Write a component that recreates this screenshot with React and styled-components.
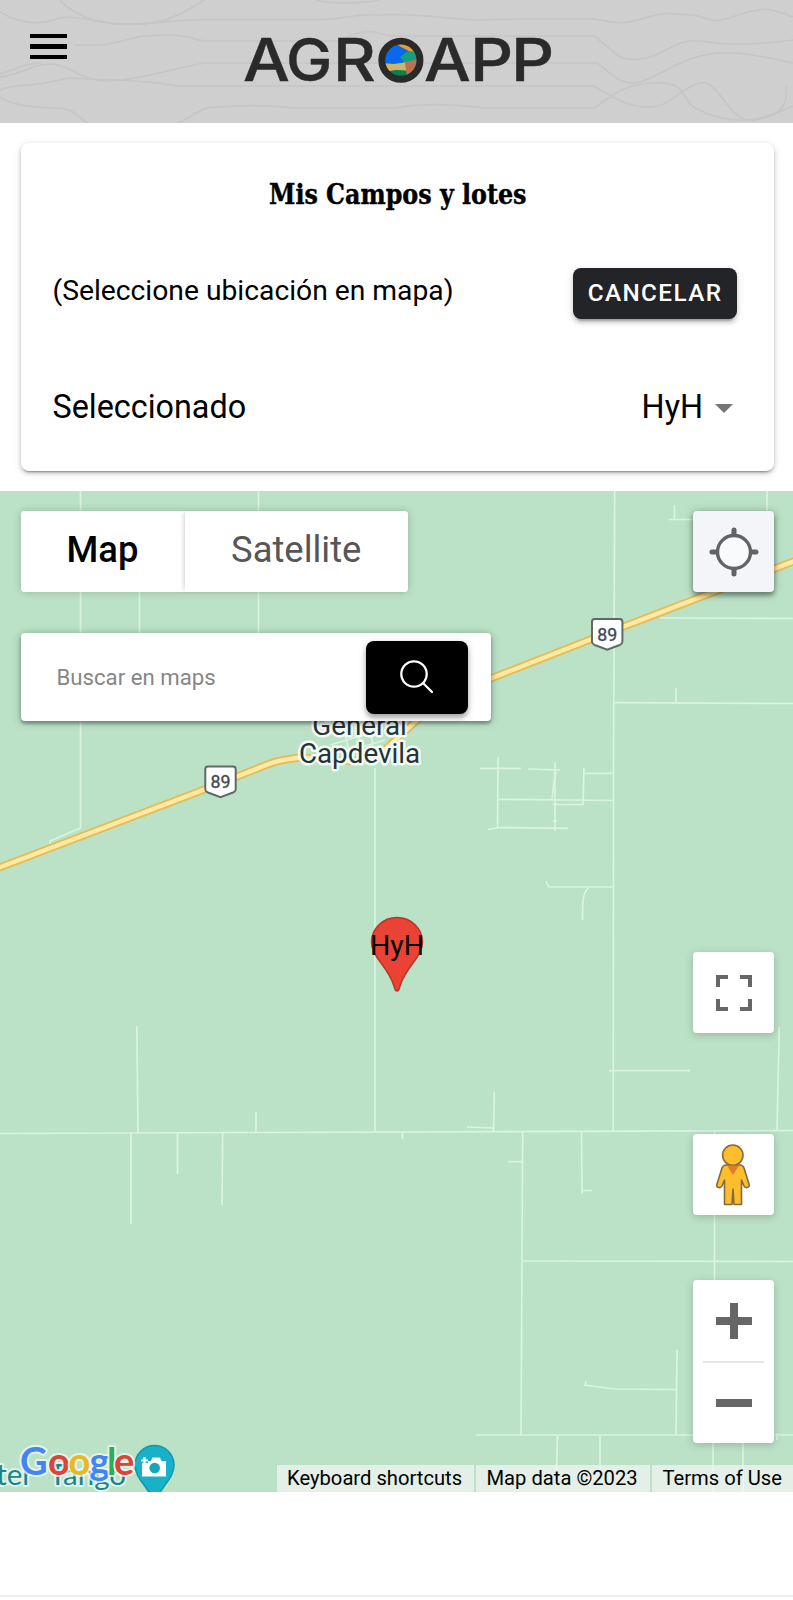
import React from "react";
import styled, { createGlobalStyle } from "styled-components";

const GlobalStyle = createGlobalStyle`
  * { box-sizing: border-box; }
  html, body { margin: 0; padding: 0; background: #fff; }
  body { font-family: Roboto, "Liberation Sans", sans-serif; color: #000; overflow: hidden; }
  button, input { font-family: inherit; border: 0; padding: 0; margin: 0; }
`;

const Page = styled.div`
  display: flex;
  flex-direction: column;
  width: 793px;
  height: 1600px;
  background: #fff;
`;

const Header = styled.header`
  position: relative;
  display: flex;
  align-items: flex-start;
  flex: 0 0 123px;
  padding: 34px 0 0 30px;
  background: #cfcfcf;
`;

const HeaderLines = styled.svg`
  position: absolute;
  inset: 0;
`;

const MenuButton = styled.button`
  display: flex;
  flex-direction: column;
  gap: 6px;
  width: 37px;
  background: none;
  position: relative;

  span {
    height: 4.3px;
    background: #000;
  }
`;

const Logo = styled.svg`
  position: relative;
  margin: -14px 0 0 163px;
`;

const Card = styled.section`
  flex: 0 0 328px;
  margin: 20px 19px 20px 20.5px;
  padding: 0 37px 0 32px;
  border-radius: 8px;
  background: #fff;
  box-shadow: 0 3px 2px -2px rgba(0, 0, 0, 0.32), 0 2px 4px rgba(0, 0, 0, 0.2),
    0 2px 10px rgba(0, 0, 0, 0.1);
`;

const Title = styled.h1`
  margin: 0 -37px 0 -32px;
  padding-top: 32px;
  height: 110px;
  text-align: center;
  font: bold 28px/40px "DejaVu Serif", serif;
  font-stretch: condensed;
  white-space: nowrap;
  -webkit-text-stroke: 0.4px #000;
  transform: scaleX(0.945);
`;

const CardRow = styled.div`
  display: flex;
  align-items: center;
  justify-content: space-between;
  height: ${(p) => p.$height}px;
  padding-top: ${(p) => p.$drop || 0}px;
`;

const Label = styled.span`
  font-size: ${(p) => p.$size}px;
  line-height: 40px;
  white-space: nowrap;
  margin-top: ${(p) => p.$drop || 0}px;
`;

const CancelButton = styled.button`
  width: 164px;
  height: 51px;
  margin-top: -1px;
  border-radius: 8px;
  background: #222428;
  color: #fff;
  font-size: 24.3px;
  font-weight: 500;
  letter-spacing: 1.4px;
  padding-bottom: 3px;
  box-shadow: 0 6px 2px -4px rgba(0, 0, 0, 0.2), 0 4px 4px rgba(0, 0, 0, 0.14),
    0 2px 9px rgba(0, 0, 0, 0.12);
`;

const Select = styled.div`
  display: flex;
  align-items: center;
  gap: 12px;
  padding-right: 4px;
`;

const Caret = styled.span`
  border: 9.5px solid transparent;
  border-top-color: #757575;
  border-bottom: 0;
  margin-top: 3px;
`;

const MapArea = styled.main`
  position: relative;
  flex: 0 0 1001px;
  overflow: hidden;
  background: #bbe2c6;
`;

const MapCanvas = styled.svg`
  position: absolute;
  inset: 0;
`;

const Controls = styled.div`
  position: relative;
  display: flex;
  justify-content: space-between;
  padding: 20px 19px 0 20.5px;
`;

const LeftControls = styled.div`
  display: flex;
  flex-direction: column;
  align-items: flex-start;
  gap: 41px;
`;

const RightControls = styled.div`
  display: flex;
  flex-direction: column;
`;

const MapTypes = styled.div`
  display: flex;
  height: 81px;
  border-radius: 4px;
  background: #fff;
  box-shadow: 0 0 8px rgba(0, 0, 0, 0.2);
`;

const MapType = styled.button`
  width: ${(p) => p.$width}px;
  padding-bottom: 4px;
  border-radius: 4px;
  background: #fff;
  font-size: 36.4px;
  font-weight: ${(p) => (p.$active ? 500 : 400)};
  color: ${(p) => (p.$active ? "#000" : "#565656")};

  & + & {
    border-radius: 0 4px 4px 0;
    box-shadow: -3px 0 4px -2px rgba(0, 0, 0, 0.18);
  }
`;

const SearchBox = styled.div`
  display: flex;
  align-items: center;
  width: 470.5px;
  height: 88px;
  padding: 0 23px 0 36px;
  border-radius: 4px;
  background: #fff;
  box-shadow: 0 3px 3px rgba(0, 0, 0, 0.25), 0 1px 9px rgba(0, 0, 0, 0.3);
`;

const SearchInput = styled.input`
  flex: 1;
  min-width: 0;
  margin-bottom: 1px;
  background: transparent;
  font-size: 22.2px;
  outline: 0;

  &::placeholder {
    color: #868686;
    opacity: 1;
  }
`;

const SearchButton = styled.button`
  display: grid;
  place-items: center;
  width: 102px;
  height: 73px;
  border-radius: 8px;
  background: #000;
  box-shadow: 0 4px 4px rgba(0, 0, 0, 0.25), 0 2px 9px rgba(0, 0, 0, 0.16);
`;

const MapButton = styled.button`
  display: grid;
  place-items: center;
  width: 81px;
  height: 81px;
  margin-top: ${(p) => p.$gap || 0}px;
  border-radius: 4px;
  background: ${(p) => (p.$raised ? "#f4f5f8" : "#fff")};
  box-shadow: ${(p) =>
    p.$raised
      ? "0 4px 4px rgba(0,0,0,.28), 0 1px 9px rgba(0,0,0,.35)"
      : "0 2px 8px rgba(0,0,0,.2)"};
`;

const ZoomGroup = styled.div`
  display: flex;
  flex-direction: column;
  align-items: center;
  width: 81px;
  height: 163px;
  margin-top: 65px;
  border-radius: 4px;
  background: #fff;
  box-shadow: 0 2px 8px rgba(0, 0, 0, 0.2);
`;

const ZoomButton = styled.button`
  display: grid;
  place-items: center;
  width: 61px;
  height: 81px;
  background: none;

  & + & {
    border-top: 2px solid #e6e6e6;
    height: 82px;
  }
`;

const Attribution = styled.div`
  position: absolute;
  right: 0;
  bottom: 0;
  display: flex;
  gap: 2px;
  height: 27px;
`;

const AttributionItem = styled.span`
  width: ${(p) => p.$width}px;
  padding-left: 10.5px;
  background: rgba(245, 245, 245, 0.7);
  font-size: 20.2px;
  line-height: 27px;
  white-space: nowrap;
`;

const BottomBar = styled.footer`
  flex: 1;
  margin-bottom: 3px;
  border-bottom: 2px solid #efefef;
`;

const contours = [
  "M0 12C20 24 38 24 50 21S60 16 78 18S100 23 125 24S170 20 207 19.500H325C350 18 350 14 380 15C415 13 440 18 475 20L520 19H594C620 24 625 24 645 18S665 13 690 15S705 26 735 16S770 8 793 17",
  "M60 0C72 14 95 24 125 24.500S175 20 207 -2",
  "M315 0C330 4 360 4 380 0",
  "M75 45H100C125 43 130 35 165 35S190 41 207 41H340C360 28 375 31 390 36H594C615 50 615 62 640 59S670 43 690 41S720 50 793 40",
  "M0 77C25 74 30 64 50 64S80 82 110 81S165 70 205 63H597C615 77 620 84 635 83S675 62 700 56S745 52 793 63",
  "M0 90C15 83 30 87 50 82S70 78 90 79S140 79 177 86H594C610 95 625 106 645 107S670 99 690 87S715 90 730 108S755 123 793 106",
  "M0 97C10 105 35 108 55 108S75 116 88 123",
  "M177 123C195 116 200 107 215 107S250 103 295 108H395C415 104 445 103 485 108H594C610 98 620 84 655 83S680 100 695 108S735 125 765 117S783 89 787 86",
  "M0 74C20 68 25 63 42 63",
];

const roads = [
  "M80.500 491V828L50 841V844", "M139.500 580V700", "M258.500 491V700",
  "M614.700 491L613.500 760L613.300 1131", "M375 768V1132", "M674.500 505V519M669 519.500H700",
  "M767 491V520", "M660 618L793 618.500", "M614 702.700L793 703.500", "M676 688V703",
  "M480 768.300H521M528 769L560 770", "M498 757L497.500 828", "M498 799.300L613 800.500",
  "M555 762V774L552 799", "M555 774V831M553 773H557M554 804H557M553 821H557", "M553 804.500H583L584 768", "M584 773.300H613",
  "M488 829.500L500 827.500L568 828.300", "M546 881L548.500 887H613", "M588 888C583 894 582.500 897 582.500 920",
  "M0 1133.500L250 1132.500L793 1130.500", "M136.800 1026L138 1133", "M131 1133V1224", "M177.500 1133V1174",
  "M222.700 1133L222 1205", "M256 1112V1133", "M402.500 1132V1139", "M494.300 1092L493.500 1131",
  "M467 1127L493 1128", "M609 1070.700H690", "M779.300 1027L777 1130", "M522.700 1131L521 1435",
  "M508 1161.700H522", "M581.500 1132L582 1194M582 1190.500H592", "M714.500 1131V1280",
  "M522.500 1261L793 1261.500", "M586 1381L585 1385L614 1389L676 1389.500", "M677 1350L676 1435",
  "M476 1435H793M777 1433V1440", "M557.500 1436L556.500 1470", "M600 1436V1470", "M713 1436V1492", "M743 1436V1492",
  "M330 745L380 730M345 735L351 760M358 732L362 752M370 730L373 745M342 753L385 740",
];

const highway =
  "M-2 868L203 790L237 776.500L270 763.500Q277 761 284 759.800L300 757.500L350 761Q375 760 390 745L415 722L438 703Q446 696 456 692L492 678L607 633L797 560";

const letters = [
  { char: "A", x: 243, scale: 1.12 },
  { char: "G", x: 286, scale: 1.05 },
  { char: "R", x: 333, scale: 1.12 },
  { char: "A", x: 424, scale: 1.12 },
  { char: "P", x: 470, scale: 1.14 },
  { char: "P", x: 511, scale: 1.14 },
];

function RouteShield({ x, y }) {
  return (
    <g transform={`translate(${x} ${y})`}>
      <path d="M-12.500 -15H12.500Q15 -15 15.200 -12.500V8Q15 10 12.500 11L0 15.600L-12.500 11Q-15 10 -15.200 8V-12.500Q-15 -15 -12.500 -15Z" fill="#fff" stroke="#5f6a65" strokeWidth="2" />
      <text y="6.500" fontSize="17.800" textAnchor="middle" fill="#444a4e" stroke="#444a4e" strokeWidth=".35">89</text>
    </g>
  );
}

function MapDrawing() {
  return (
    <MapCanvas width="793" height="1001" viewBox="0 491 793 1001" fontFamily="Roboto, sans-serif">
      <g fill="none" stroke="#d9f4e0" strokeWidth="1.700">
        {roads.map((d) => <path key={d} d={d} />)}
      </g>
      <path d={highway} fill="none" stroke="#e2bd58" strokeWidth="8" />
      <path d={highway} fill="none" stroke="#ffe9a3" strokeWidth="4.400" />
      <RouteShield x={220.5} y={781.5} />
      <RouteShield x={607.2} y={634} />
      <g fontSize="27.800" textAnchor="middle" fill="#263238" stroke="#f3fbf5" strokeWidth="5" strokeLinejoin="round" paintOrder="stroke">
        <text x="359.500" y="735">General</text>
        <text x="359.500" y="763.300">Capdevila</text>
      </g>
      <path d="M397 991C399 991 399.300 989 400 986C402 979 407 971 413 963C418.500 956 422.500 950 422.500 942A25.500 24.500 0 0 0 371.500 942C371.500 950 375.500 956 381 963C387 971 392 979 394 986C394.700 989 395 991 397 991Z" fill="#ea4335" stroke="#b5372b" strokeWidth="1.500" />
      <text x="397" y="954.700" fontSize="28.500" textAnchor="middle">HyH</text>
      <g fontSize="29.500" fontFamily="Lato, sans-serif" fill="#1d838c" stroke="#dff3e6" strokeWidth="4" strokeLinejoin="round" paintOrder="stroke">
        <text x="33" y="1484.500" textAnchor="end">nter</text>
        <text x="49" y="1484.500">Tango</text>
      </g>
      <path d="M135 1465A19.500 19.500 0 0 1 174 1465C174 1477 164 1484 158 1496H151C145 1484 135 1477 135 1465Z" fill="#17b1c9" stroke="#1597ab" strokeWidth="1.500" />
      <path d="M142 1463H148V1461H151L152.500 1457.500H160L161.500 1461H166V1476.500H142Z" fill="#fff" />
      <circle cx="154.700" cy="1468" r="5.300" fill="#17a5bb" />
      <path d="M144.500 1457V1464M141 1460.500H148" stroke="#fff" strokeWidth="2.200" />
      <g fontFamily="Lato, sans-serif" fontSize="38" fontWeight="700" stroke="#eff9f2" strokeWidth="4" strokeOpacity=".8" strokeLinejoin="round" paintOrder="stroke">
        <text y="1475">
          <tspan x="20" fill="#4285f4">G</tspan>
          <tspan x="48" fill="#db4437">o</tspan>
          <tspan x="68.500" fill="#e8b91f">o</tspan>
          <tspan x="89.500" fill="#4285f4">g</tspan>
          <tspan x="107" fill="#34a853">l</tspan>
          <tspan x="114" fill="#db4437">e</tspan>
        </text>
      </g>
    </MapCanvas>
  );
}

function Brand() {
  return (
    <Logo width="340" height="80" viewBox="230 20 340 80">
      <g fontFamily="Inter, sans-serif" fontSize="59" fontWeight="500" fill="#2a2a2a" stroke="#2a2a2a" strokeWidth=".4">
        {letters.map(({ char, x, scale }) => (
          <text key={x} transform={`translate(${x} 81) scale(${scale} 1)`}>{char}</text>
        ))}
      </g>
      <g clipPath="url(#globe)">
        <rect x="382" y="40" width="40" height="42" fill="#0868ee" />
        <path d="M398 41L424 41V54L411 52L401 47L398 45Z" fill="#ed9b30" />
        <path d="M400 57L408 51L424 52V62L405 64Z" fill="#12a080" />
        <path d="M382 63L394 64L407 62V71L396 70L382 73Z" fill="#d2b362" />
        <path d="M382 72L398 70L408 71V82H382Z" fill="#078348" />
        <path d="M405 62L418 59V78H407Z" fill="#b97350" />
      </g>
      <circle cx="400.900" cy="60.200" r="19.100" fill="none" stroke="#2a2a2a" strokeWidth="6.900" />
      <clipPath id="globe"><circle cx="400.900" cy="60.200" r="18" /></clipPath>
    </Logo>
  );
}

const PegmanIcon = styled.svg`
  margin-right: 2px;
`;

function Pegman() {
  return (
    <PegmanIcon width="36" height="62" viewBox="0 0 36 62">
      <g fill="#fdbd2d" stroke="#826c3e" strokeWidth="1.600" strokeLinejoin="round">
        <path d="M11 21H25Q28 21 29 24L34 40Q35 43 32 43.500Q30 44 29 42L26.500 36V60.500H19L18 45L17 60.500H9.500V36L7 42Q6 44 3.500 43.500Q1 43 2 40L7 24Q8 21 11 21Z" />
        <circle cx="17.800" cy="11.200" r="10.200" />
      </g>
      <path d="M12 21.500H24L18 31Z" fill="#e07d2a" />
    </PegmanIcon>
  );
}

export default function App() {
  return (
    <>
      <GlobalStyle />
      <Page>
        <Header>
          <HeaderLines width="793" height="123">
            <g fill="none" stroke="#c6c6c6" strokeWidth="1.700">
              {contours.map((d) => <path key={d} d={d} />)}
            </g>
          </HeaderLines>
          <MenuButton aria-label="Menu"><span /><span /><span /></MenuButton>
          <Brand />
        </Header>

        <Card>
          <Title>Mis Campos y lotes</Title>
          <CardRow $height={82}>
            <Label $size={28.25} $drop={-7}>(Seleccione ubicación en mapa)</Label>
            <CancelButton>CANCELAR</CancelButton>
          </CardRow>
          <CardRow $height={136} $drop={7}>
            <Label $size={32.35}>Seleccionado</Label>
            <Select>
              <Label $size={32.35}>HyH</Label>
              <Caret />
            </Select>
          </CardRow>
        </Card>

        <MapArea>
          <MapDrawing />
          <Controls>
            <LeftControls>
              <MapTypes>
                <MapType $width={164} $active>Map</MapType>
                <MapType $width={223.5}>Satellite</MapType>
              </MapTypes>
              <SearchBox>
                <SearchInput placeholder="Buscar en maps" />
                <SearchButton aria-label="Buscar">
                  <svg width="34" height="34" viewBox="0 0 34 34" fill="none" stroke="#fff" strokeWidth="2.300" strokeLinecap="round">
                    <circle cx="14" cy="14" r="12.700" />
                    <path d="M23 23L32 32" />
                  </svg>
                </SearchButton>
              </SearchBox>
            </LeftControls>
            <RightControls>
              <MapButton $raised aria-label="Mi ubicación">
                <svg width="50" height="50" viewBox="0 0 50 50" fill="none" stroke="#626366" strokeWidth="3.400">
                  <circle cx="25" cy="25" r="16.500" fill="#f9fafc" />
                  <path d="M25 3V7M25 43V47M3 25H7M43 25H47" strokeWidth="5" strokeLinecap="round" />
                </svg>
              </MapButton>
              <MapButton $gap={360} aria-label="Fullscreen">
                <svg width="36" height="36" viewBox="0 0 36 36" fill="none" stroke="#666" strokeWidth="4">
                  <path d="M2 12V2H12M24 2H34V12M34 24V34H24M12 34H2V24" />
                </svg>
              </MapButton>
              <MapButton $gap={101} aria-label="Street View"><Pegman /></MapButton>
              <ZoomGroup>
                <ZoomButton aria-label="Zoom in">
                  <svg width="36" height="36" stroke="#666" strokeWidth="8"><path d="M18 0V36M0 18H36" /></svg>
                </ZoomButton>
                <ZoomButton aria-label="Zoom out">
                  <svg width="36" height="36" stroke="#666" strokeWidth="8"><path d="M0 18H36" /></svg>
                </ZoomButton>
              </ZoomGroup>
            </RightControls>
          </Controls>
          <Attribution>
            <AttributionItem $width={197.5}>Keyboard shortcuts</AttributionItem>
            <AttributionItem $width={174}>Map data ©2023</AttributionItem>
            <AttributionItem $width={141}>Terms of Use</AttributionItem>
          </Attribution>
        </MapArea>
        <BottomBar />
      </Page>
    </>
  );
}
